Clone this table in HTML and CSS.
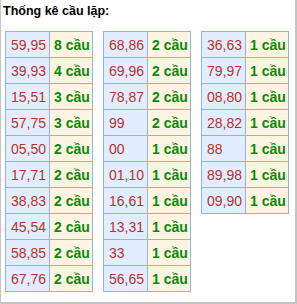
FILE: index.html
```html
<!DOCTYPE html>
<html>
<head>
<meta charset="utf-8">
<link rel="stylesheet" href="styles.css">
</head>
<body>
<div class="box">
  <div class="title">Thống kê cầu lặp:</div>
  <div class="tables">
    <table class="tk">
      <tr><td class="num">59,95</td><td class="cnt">8 cầu</td></tr>
      <tr><td class="num">39,93</td><td class="cnt">4 cầu</td></tr>
      <tr><td class="num">15,51</td><td class="cnt">3 cầu</td></tr>
      <tr><td class="num">57,75</td><td class="cnt">3 cầu</td></tr>
      <tr><td class="num">05,50</td><td class="cnt">2 cầu</td></tr>
      <tr><td class="num">17,71</td><td class="cnt">2 cầu</td></tr>
      <tr><td class="num">38,83</td><td class="cnt">2 cầu</td></tr>
      <tr><td class="num">45,54</td><td class="cnt">2 cầu</td></tr>
      <tr><td class="num">58,85</td><td class="cnt">2 cầu</td></tr>
      <tr><td class="num">67,76</td><td class="cnt">2 cầu</td></tr>
    </table>
    <table class="tk">
      <tr><td class="num">68,86</td><td class="cnt">2 cầu</td></tr>
      <tr><td class="num">69,96</td><td class="cnt">2 cầu</td></tr>
      <tr><td class="num">78,87</td><td class="cnt">2 cầu</td></tr>
      <tr><td class="num">99</td><td class="cnt">2 cầu</td></tr>
      <tr><td class="num">00</td><td class="cnt">1 cầu</td></tr>
      <tr><td class="num">01,10</td><td class="cnt">1 cầu</td></tr>
      <tr><td class="num">16,61</td><td class="cnt">1 cầu</td></tr>
      <tr><td class="num">13,31</td><td class="cnt">1 cầu</td></tr>
      <tr><td class="num">33</td><td class="cnt">1 cầu</td></tr>
      <tr><td class="num">56,65</td><td class="cnt">1 cầu</td></tr>
    </table>
    <table class="tk">
      <tr><td class="num">36,63</td><td class="cnt">1 cầu</td></tr>
      <tr><td class="num">79,97</td><td class="cnt">1 cầu</td></tr>
      <tr><td class="num">08,80</td><td class="cnt">1 cầu</td></tr>
      <tr><td class="num">28,82</td><td class="cnt">1 cầu</td></tr>
      <tr><td class="num">88</td><td class="cnt">1 cầu</td></tr>
      <tr><td class="num">89,98</td><td class="cnt">1 cầu</td></tr>
      <tr><td class="num">09,90</td><td class="cnt">1 cầu</td></tr>
    </table>
  </div>
</div>
</body>
</html>
```
FILE: styles.css
```css
html, body {
  margin: 0;
  padding: 0;
  background: #ffffff;
}
body {
  font-family: "Liberation Sans", Arial, sans-serif;
}
.box {
  box-sizing: border-box;
  width: 297px;
  height: 304px;
  border-left: 1px solid #c4c4c4;
  border-right: 2px solid #c4c4c4;
  border-bottom: 2px solid #c4c4c4;
  padding: 3px 0 0 1px;
}
.title {
  font-size: 12.5px;
  font-weight: bold;
  color: #000;
  line-height: 17px;
  margin-left: 1px;
}
.tables {
  display: flex;
  align-items: flex-start;
  gap: 10px;
  margin-top: 11px;
  margin-left: 3px;
}
.tk {
  border-collapse: collapse;
}
.tk td {
  border: 1px solid #8fb2f0;
  height: 25px;
  padding: 0;
  font-size: 14px;
  line-height: 16px;
  text-align: left;
  vertical-align: middle;
  box-sizing: content-box;
}
.tk td.num {
  background: #e2edff;
  color: #b8322a;
  width: 38px;
  padding-left: 5px;
}
.tk td.cnt {
  background: #fff4e1;
  color: #0a8a0a;
  font-weight: bold;
  width: 38px;
  padding-left: 4px;
}
```
